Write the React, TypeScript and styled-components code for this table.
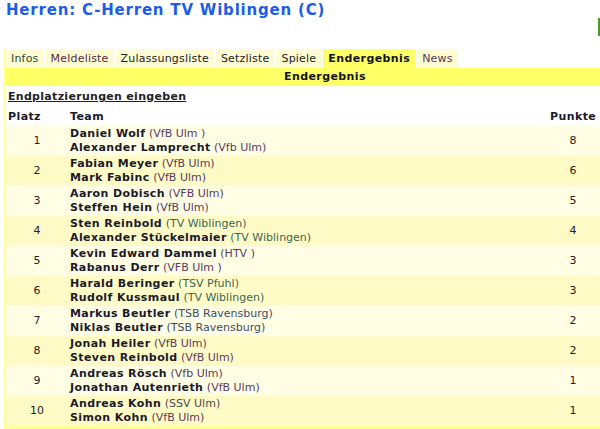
import React from "react";
import styled, { createGlobalStyle } from "styled-components";

const Global = createGlobalStyle`
  html, body { margin: 0; padding: 0; background: #ffffff; overflow: hidden; }
  body { font-family: "DejaVu Sans", Verdana, sans-serif; font-size: 11px; color: #1a1a2a; }
`;

const Page = styled.div`
  position: relative;
  width: 600px;
  height: 429px;
  overflow: hidden;
`;

const Title = styled.h1`
  margin: 0;
  padding: 1px 0 0 6px;
  height: 21px;
  font-size: 15px;
  line-height: 18px;
  font-weight: bold;
  letter-spacing: 0.8px;
  color: #1d5de6;
  white-space: nowrap;
`;

const GreenMark = styled.div`
  position: absolute;
  left: 598px;
  top: 18px;
  width: 4px;
  height: 18px;
  background: #4c9a2e;
`;

const Panel = styled.div`
  margin: 27px 0 0 4px;
  width: 638px;
  border-left: 2px solid #ffff9a;
  border-bottom: 3px solid #ffff9a;
`;

const Tabs = styled.div`
  display: flex;
  gap: 2px;
  height: 19px;
`;

const Tab = styled.div<{ $active?: boolean; $color?: string }>`
  padding: 0 5px 0 5px;
  line-height: 19px;
  letter-spacing: ${(p) => (p.$active ? "0.4px" : "0.2px")};
  background: ${(p) => (p.$active ? "#ffff66" : "#fffcd4")};
  font-weight: ${(p) => (p.$active ? "bold" : "normal")};
  color: ${(p) => (p.$active ? "#141420" : p.$color || "#222222")};
  white-space: nowrap;
`;

const Bar = styled.div`
  background: #ffff66;
  height: 18px;
  line-height: 18px;
  text-align: center;
  font-weight: bold;
  letter-spacing: 0.4px;
  color: #141420;
`;

const EditLink = styled.div`
  padding: 4px 0 0 2px;
  height: 18px;
  line-height: 14px;
  font-weight: bold;
  letter-spacing: 0.3px;
  text-decoration: underline;
  color: #1f1f2a;
`;

const Grid = styled.div`
  display: grid;
  grid-template-columns: 62px 1fr 50px 46px;
`;

const HeadCell = styled.div<{ $align?: string }>`
  padding: 2px 2px 0 2px;
  height: 16px;
  line-height: 14px;
  font-weight: bold;
  letter-spacing: 0.4px;
  text-align: ${(p) => p.$align || "left"};
  color: #1a1a2a;
  background: #ffffff;
  white-space: nowrap;
`;

const Cell = styled.div<{ $alt?: boolean; $align?: string }>`
  background: ${(p) => (p.$alt ? "#fffbc6" : "#fffde4")};
  height: 30px;
  padding: 1px 2px;
  box-sizing: border-box;
  display: flex;
  flex-direction: column;
  justify-content: center;
  align-items: ${(p) => (p.$align === "center" ? "center" : "flex-start")};
  line-height: 14px;
  color: #222222;
`;

const Player = styled.div`
  white-space: nowrap;
`;

const Name = styled.span`
  font-weight: bold;
  letter-spacing: 0.4px;
  color: #1a1a2a;
`;

const Club = styled.span<{ $color: string }>`
  color: ${(p) => p.$color};
`;

const clubColors: Record<string, string> = {
  "VfB Ulm ": "#5a3c5e",
  "Vfb Ulm": "#5a3c5e",
  "VfB Ulm": "#5a3c5e",
  "VFB Ulm": "#5a3c5e",
  "VFB Ulm ": "#5a3c5e",
  "TV Wiblingen": "#3a6656",
  "HTV ": "#5a3c5e",
  "TSV Pfuhl": "#3a6656",
  "TSB Ravensburg": "#3a4e6a",
  "SSV Ulm": "#4a4a55",
};

type P = [string, string];
const rows: { place: number; players: [P, P]; points: number }[] = [
  { place: 1, players: [["Daniel Wolf", "VfB Ulm "], ["Alexander Lamprecht", "Vfb Ulm"]], points: 8 },
  { place: 2, players: [["Fabian Meyer", "VfB Ulm"], ["Mark Fabinc", "VfB Ulm"]], points: 6 },
  { place: 3, players: [["Aaron Dobisch", "VFB Ulm"], ["Steffen Hein", "VfB Ulm"]], points: 5 },
  { place: 4, players: [["Sten Reinbold", "TV Wiblingen"], ["Alexander Stückelmaier", "TV Wiblingen"]], points: 4 },
  { place: 5, players: [["Kevin Edward Dammel", "HTV "], ["Rabanus Derr", "VFB Ulm "]], points: 3 },
  { place: 6, players: [["Harald Beringer", "TSV Pfuhl"], ["Rudolf Kussmaul", "TV Wiblingen"]], points: 3 },
  { place: 7, players: [["Markus Beutler", "TSB Ravensburg"], ["Niklas Beutler", "TSB Ravensburg"]], points: 2 },
  { place: 8, players: [["Jonah Heiler", "VfB Ulm"], ["Steven Reinbold", "VfB Ulm"]], points: 2 },
  { place: 9, players: [["Andreas Rösch", "Vfb Ulm"], ["Jonathan Autenrieth", "VfB Ulm"]], points: 1 },
  { place: 10, players: [["Andreas Kohn", "SSV Ulm"], ["Simon Kohn", "VfB Ulm"]], points: 1 },
];

const tabs: { label: string; color?: string; active?: boolean }[] = [
  { label: "Infos", color: "#2e4a30" },
  { label: "Meldeliste", color: "#552a3a" },
  { label: "Zulassungsliste" },
  { label: "Setzliste" },
  { label: "Spiele" },
  { label: "Endergebnis", active: true },
  { label: "News", color: "#4e3a50" },
];

export default function App() {
  return (
    <Page>
      <Global />
      <Title>Herren: C-Herren TV Wiblingen (C)</Title>
      <GreenMark />
      <Panel>
        <Tabs>
          {tabs.map((t) => (
            <Tab key={t.label} $active={t.active} $color={t.color}>
              {t.label}
            </Tab>
          ))}
        </Tabs>
        <Bar>Endergebnis</Bar>
        <EditLink>Endplatzierungen eingeben</EditLink>
        <Grid>
          <HeadCell>Platz</HeadCell>
          <HeadCell>Team</HeadCell>
          <HeadCell $align="center">Punkte</HeadCell>
          <HeadCell />
          {rows.map((r, i) => {
            const alt = i % 2 === 1;
            return (
              <React.Fragment key={r.place}>
                <Cell $alt={alt} $align="center">{r.place}</Cell>
                <Cell $alt={alt}>
                  {r.players.map(([n, c]) => (
                    <Player key={n}>
                      <Name>{n}</Name> <Club $color={clubColors[c]}>({c})</Club>
                    </Player>
                  ))}
                </Cell>
                <Cell $alt={alt} $align="center">{r.points}</Cell>
                <Cell $alt={alt} />
              </React.Fragment>
            );
          })}
        </Grid>
      </Panel>
    </Page>
  );
}
